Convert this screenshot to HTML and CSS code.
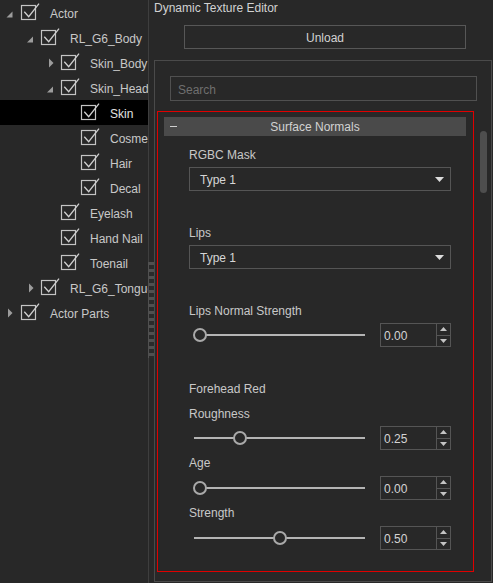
FILE: index.html
```html
<!DOCTYPE html>
<html>
<head>
<meta charset="utf-8">
<link rel="stylesheet" href="styles.css">
</head>
<body>
<div class="app">
  <div class="tree">
    <div class="row l0"><svg class="arrow" viewBox="0 0 21 25"><polygon points="12.5,11.5 12.5,17.5 6.5,17.5"/></svg><svg class="cb" viewBox="0 0 20 18"><rect x="0.5" y="2.5" width="14" height="14"/><path d="M3.3 8.7 L7.7 13.7 L18 0.6"/></svg><span class="name">Actor</span></div>
    <div class="row l1"><svg class="arrow" viewBox="0 0 21 25"><polygon points="13,11.5 13,17.5 7,17.5"/></svg><svg class="cb" viewBox="0 0 20 18"><rect x="0.5" y="2.5" width="14" height="14"/><path d="M3.3 8.7 L7.7 13.7 L18 0.6"/></svg><span class="name">RL_G6_Body</span></div>
    <div class="row l2"><svg class="arrow" viewBox="0 0 21 25"><polygon points="9,8.5 13.5,13 9,17.5"/></svg><svg class="cb" viewBox="0 0 20 18"><rect x="0.5" y="2.5" width="14" height="14"/><path d="M3.3 8.7 L7.7 13.7 L18 0.6"/></svg><span class="name">Skin_Body</span></div>
    <div class="row l2"><svg class="arrow" viewBox="0 0 21 25"><polygon points="13,11.5 13,17.5 7,17.5"/></svg><svg class="cb" viewBox="0 0 20 18"><rect x="0.5" y="2.5" width="14" height="14"/><path d="M3.3 8.7 L7.7 13.7 L18 0.6"/></svg><span class="name">Skin_Head</span></div>
    <div class="row l3 sel"><span class="arrow"></span><svg class="cb" viewBox="0 0 20 18"><rect x="0.5" y="2.5" width="14" height="14"/><path d="M3.3 8.7 L7.7 13.7 L18 0.6"/></svg><span class="name">Skin</span></div>
    <div class="row l3"><span class="arrow"></span><svg class="cb" viewBox="0 0 20 18"><rect x="0.5" y="2.5" width="14" height="14"/><path d="M3.3 8.7 L7.7 13.7 L18 0.6"/></svg><span class="name">Cosmetic</span></div>
    <div class="row l3"><span class="arrow"></span><svg class="cb" viewBox="0 0 20 18"><rect x="0.5" y="2.5" width="14" height="14"/><path d="M3.3 8.7 L7.7 13.7 L18 0.6"/></svg><span class="name">Hair</span></div>
    <div class="row l3"><span class="arrow"></span><svg class="cb" viewBox="0 0 20 18"><rect x="0.5" y="2.5" width="14" height="14"/><path d="M3.3 8.7 L7.7 13.7 L18 0.6"/></svg><span class="name">Decal</span></div>
    <div class="row l2"><span class="arrow"></span><svg class="cb" viewBox="0 0 20 18"><rect x="0.5" y="2.5" width="14" height="14"/><path d="M3.3 8.7 L7.7 13.7 L18 0.6"/></svg><span class="name">Eyelash</span></div>
    <div class="row l2"><span class="arrow"></span><svg class="cb" viewBox="0 0 20 18"><rect x="0.5" y="2.5" width="14" height="14"/><path d="M3.3 8.7 L7.7 13.7 L18 0.6"/></svg><span class="name">Hand Nail</span></div>
    <div class="row l2"><span class="arrow"></span><svg class="cb" viewBox="0 0 20 18"><rect x="0.5" y="2.5" width="14" height="14"/><path d="M3.3 8.7 L7.7 13.7 L18 0.6"/></svg><span class="name">Toenail</span></div>
    <div class="row l1"><svg class="arrow" viewBox="0 0 21 25"><polygon points="9,8.5 13.5,13 9,17.5"/></svg><svg class="cb" viewBox="0 0 20 18"><rect x="0.5" y="2.5" width="14" height="14"/><path d="M3.3 8.7 L7.7 13.7 L18 0.6"/></svg><span class="name">RL_G6_Tongue</span></div>
    <div class="row l0"><svg class="arrow" viewBox="0 0 21 25"><polygon points="8,8.5 12.5,13 8,17.5"/></svg><svg class="cb" viewBox="0 0 20 18"><rect x="0.5" y="2.5" width="14" height="14"/><path d="M3.3 8.7 L7.7 13.7 L18 0.6"/></svg><span class="name">Actor Parts</span></div>
  </div>
  <div class="splitter"><div class="grip"></div></div>
  <div class="editor">
    <div class="title">Dynamic Texture Editor</div>
    <div class="unload"><span class="btxt">Unload</span></div>
    <div class="frame">
      <div class="search"><span class="btxt">Search</span></div>
      <div class="content">
        <div class="outline">
          <div class="section"><span class="minus"></span><span class="section-title">Surface Normals</span><span></span></div>
          <div class="fields">
            <div class="lbl mt12">RGBC Mask</div>
            <div class="combo mt5"><span class="btxt">Type 1</span><svg class="drop" viewBox="0 0 9 5"><polygon points="0,0 9,0 4.5,5"/></svg></div>
            <div class="lbl mt35">Lips</div>
            <div class="combo mt5"><span class="btxt">Type 1</span><svg class="drop" viewBox="0 0 9 5"><polygon points="0,0 9,0 4.5,5"/></svg></div>
            <div class="lbl mt35">Lips Normal Strength</div>
            <div class="srow mt5">
              <div class="slider"><span class="handle" style="left:-1px"></span></div>
              <div class="spin"><span class="val">0.00</span><span class="btns"><span class="up"><svg viewBox="0 0 7 4"><polygon points="0,4 7,4 3.5,0"/></svg></span><span class="down"><svg viewBox="0 0 7 4"><polygon points="0,0 7,0 3.5,4"/></svg></span></span></div>
            </div>
            <div class="lbl mt35">Forehead Red</div>
            <div class="lbl mt11">Roughness</div>
            <div class="srow mt5">
              <div class="slider"><span class="handle" style="left:39px"></span></div>
              <div class="spin"><span class="val">0.25</span><span class="btns"><span class="up"><svg viewBox="0 0 7 4"><polygon points="0,4 7,4 3.5,0"/></svg></span><span class="down"><svg viewBox="0 0 7 4"><polygon points="0,0 7,0 3.5,4"/></svg></span></span></div>
            </div>
            <div class="lbl mt6">Age</div>
            <div class="srow mt6">
              <div class="slider"><span class="handle" style="left:-1px"></span></div>
              <div class="spin"><span class="val">0.00</span><span class="btns"><span class="up"><svg viewBox="0 0 7 4"><polygon points="0,4 7,4 3.5,0"/></svg></span><span class="down"><svg viewBox="0 0 7 4"><polygon points="0,0 7,0 3.5,4"/></svg></span></span></div>
            </div>
            <div class="lbl mt6">Strength</div>
            <div class="srow mt6">
              <div class="slider"><span class="handle" style="left:79px"></span></div>
              <div class="spin"><span class="val">0.50</span><span class="btns"><span class="up"><svg viewBox="0 0 7 4"><polygon points="0,4 7,4 3.5,0"/></svg></span><span class="down"><svg viewBox="0 0 7 4"><polygon points="0,0 7,0 3.5,4"/></svg></span></span></div>
            </div>
          </div>
        </div>
        <div class="scrollbar"><div class="thumb"></div></div>
      </div>
    </div>
  </div>
</div>
</body>
</html>
```
FILE: styles.css
```css
* { box-sizing: border-box; }
html, body { margin: 0; padding: 0; }
body {
  background: #282828;
  width: 493px;
  height: 583px;
  overflow: hidden;
  font-family: "Liberation Sans", Arial, sans-serif;
  font-size: 12px;
  color: #c8c8c8;
}
.app { display: flex; height: 583px; }

/* tree */
.tree { width: 148px; flex: none; overflow: hidden; }
.row { display: flex; align-items: center; height: 25px; white-space: nowrap; }
.row.sel { background: #000; color: #e2e2e2; }
.l1 { padding-left: 20px; }
.l2 { padding-left: 40px; }
.l3 { padding-left: 60px; }
.arrow { width: 21px; height: 25px; flex: none; display: block; }
.arrow polygon { fill: #9c9c9c; }
.cb { width: 20px; height: 18px; flex: none; align-self: flex-start; margin-top: 3px; overflow: visible; }
.cb rect { fill: none; stroke: #c4c4c4; stroke-width: 1.2; }
.cb path { fill: none; stroke: #cfcfcf; stroke-width: 1.3; }
.name { margin-left: 9px; padding-top: 2px; }

/* splitter */
.splitter { width: 6px; flex: none; border-left: 1px solid #3e3e3e; display: flex; flex-direction: column; }
.grip {
  margin-top: 262px;
  margin-left: -1px;
  width: 7px;
  height: 96px;
  background-color: #505050;
  background-image: repeating-linear-gradient(to bottom, #505050 0 3px, #2a2a2a 3px 7px);
  background-size: 5px 100%;
  background-position: 1px 0;
  background-repeat: no-repeat;
}

/* editor */
.editor { width: 339px; flex: none; display: flex; flex-direction: column; }
.title { height: 14px; line-height: 14px; padding-top: 1px; color: #d2d2d2; white-space: nowrap; }
.btxt { padding-top: 2px; }
.unload {
  margin: 11px 0 0 30px;
  width: 282px;
  height: 24px;
  border: 1px solid #575757;
  display: flex;
  align-items: center;
  justify-content: center;
  color: #d2d2d2;
}
.frame {
  margin-top: 11px;
  width: 338px;
  height: 522px;
  border: 1px solid #4a4a4a;
  padding-top: 15px;
}
.search {
  margin-left: 15px;
  width: 307px;
  height: 25px;
  border: 1px solid #505050;
  color: #6f6f6f;
  padding-left: 7px;
  display: flex;
  align-items: center;
}
.content { display: flex; margin-top: 10px; }
.outline {
  margin-left: 2px;
  width: 317px;
  height: 461px;
  border: 1px solid #e00000;
  padding: 5px 7px 0 6px;
}
.scrollbar { margin-left: 6px; width: 7px; padding-top: 20px; }
.thumb { width: 7px; height: 62px; border-radius: 4px; background: #4e4e4e; }

.section {
  height: 19px;
  background: #4a4a4a;
  display: grid;
  grid-template-columns: 20px 1fr 20px;
  align-items: center;
  color: #d2d2d2;
}
.minus { width: 7px; height: 1px; background: #cfcfcf; margin-left: 6px; }
.section-title { text-align: center; padding-top: 1px; }

.fields { margin-left: 25px; }
.lbl { line-height: 14px; height: 14px; white-space: nowrap; }
.mt5 { margin-top: 5px; }
.mt6 { margin-top: 6px; }
.mt11 { margin-top: 11px; }
.mt12 { margin-top: 12px; }
.mt35 { margin-top: 35px; }

.combo {
  width: 262px;
  height: 24px;
  border: 1px solid #555;
  display: flex;
  align-items: center;
  justify-content: space-between;
  padding: 0 6px 0 10px;
  color: #d6d6d6;
}
.drop { width: 9px; height: 5px; }
.drop polygon { fill: #dcdcdc; }

.srow { display: flex; align-items: center; height: 24px; }
.slider { margin-left: 5px; width: 171px; height: 24px; position: relative; flex: none; }
.slider::before {
  content: "";
  position: absolute;
  left: 0; right: 0;
  top: 11px;
  height: 2px;
  background: #b4b4b4;
}
.handle {
  position: absolute;
  top: 5px;
  width: 14px;
  height: 14px;
  border: 2px solid #a9a9a9;
  border-radius: 50%;
  background: #282828;
}
.spin {
  margin-left: 15px;
  width: 71px;
  height: 24px;
  border: 1px solid #555;
  display: flex;
  flex: none;
}
.val { width: 55px; padding-left: 3px; padding-top: 2px; display: flex; align-items: center; color: #d4d4d4; }
.btns { width: 14px; border-left: 1px solid #555; display: flex; flex-direction: column; }
.btns > span { flex: 1; display: flex; align-items: center; justify-content: center; }
.btns .up { border-bottom: 1px solid #555; }
.btns svg { width: 7px; height: 4px; display: block; }
.btns polygon { fill: #c4c4c4; }
```
